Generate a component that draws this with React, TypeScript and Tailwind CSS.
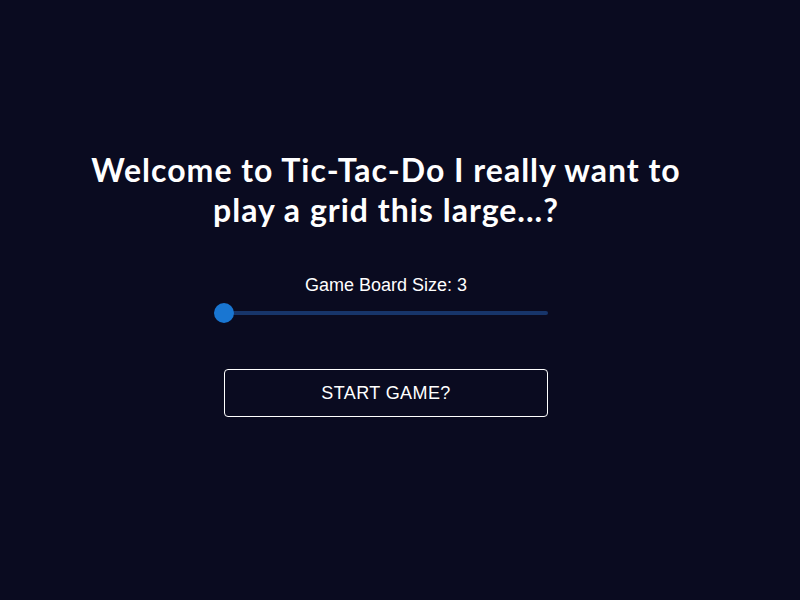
import React, { useState } from 'react';

const App: React.FC = () => {
  const [size] = useState(3);

  return (
    <div className="min-h-screen w-full bg-[#0a0b20] text-white flex flex-col items-center pr-[28px] pt-[150px]">
      <h1
        className="w-[600px] text-center text-[32px] leading-[40px] font-bold tracking-[1px]"
        style={{ fontFamily: 'Lato, "Open Sans", sans-serif' }}
      >
        Welcome to Tic-Tac-Do I really want to play a grid this large...?
      </h1>

      <div className="mt-[45px] w-[324px] flex flex-col items-center font-['Liberation_Sans',Arial,sans-serif]">
        <p className="text-[18px] leading-[21px]">Game Board Size: {size}</p>

        {/* slider */}
        <div className="relative mt-[7px] h-[20px] w-full flex items-center">
          <div className="h-[4px] w-full rounded-full bg-[#17356a]" />
          <div className="absolute left-[-10px] top-0 h-[20px] w-[20px] rounded-full bg-[#1976d2]" />
        </div>

        <button className="mt-[46px] h-[48px] w-full rounded-[4px] border border-white bg-transparent text-[18px] tracking-[0.4px] text-white">
          START GAME?
        </button>
      </div>
    </div>
  );
};

export default App;
